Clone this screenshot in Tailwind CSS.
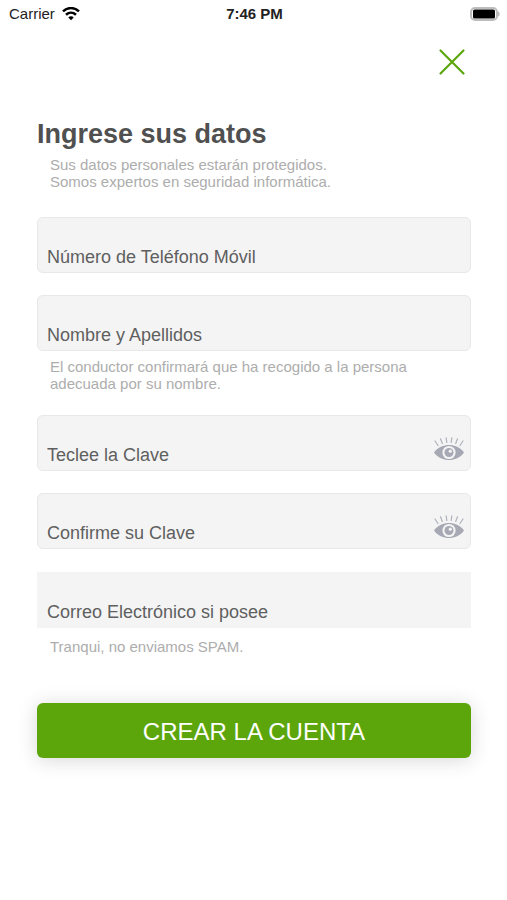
<!DOCTYPE html>
<html lang="es">
<head>
<meta charset="utf-8">
<meta name="viewport" content="width=device-width, initial-scale=1">
<title>Ingrese sus datos</title>
<script src="https://cdn.jsdelivr.net/npm/@tailwindcss/browser@4"></script>
</head>
<body class="min-h-screen bg-white font-['Liberation_Sans',Arial,sans-serif] text-[#545454]">
<svg class="hidden" aria-hidden="true">
  <symbol id="eye" viewBox="0 0 30 24">
    <path d="M0 15.500C4 10 9.500 8 15 8S26 10 30 15.500C26 21 20.500 23 15 23S4 21 0 15.500Z" fill="#a6a9b4"/>
    <circle cx="15" cy="15.500" r="6.600" fill="#f4f4f4"/>
    <circle cx="15" cy="15.500" r="4.500" fill="#a6a9b4"/>
    <circle cx="16.300" cy="14.200" r="1.600" fill="#f4f4f4"/>
    <path d="M1 4L4 8.500M6.500 1.800L8.300 6.500M12.200 .8L12.800 5.500M17.800 .8L17.200 5.500M23.500 1.800L21.700 6.500M29 4L26 8.500" stroke="#b0b2bc" stroke-width="1.200" stroke-linecap="round"/>
  </symbol>
</svg>
<header class="grid h-7 grid-cols-3 items-center pl-[9px] pr-[7px] text-[15px] leading-5 text-[#222]">
  <div class="flex items-center gap-[7px]">
    <span>Carrier</span>
    <svg class="h-[14px] w-[18px]" viewBox="0 0 18 14" fill="none" stroke="#000" stroke-width="2.500" aria-hidden="true">
      <path d="M1 4.300C5.500 0 12.500 0 17 4.300M4 7.700C7 5 11 5 14 7.700"/>
      <path d="M6.300 10.400C7.800 9 10.200 9 11.700 10.400L9 13.300Z" fill="#000" stroke="none"/>
    </svg>
  </div>
  <time class="text-center font-bold">7:46 PM</time>
  <svg class="h-[15px] w-[30px] justify-self-end" viewBox="0 0 30 15" aria-hidden="true">
    <rect x="1" y="1" width="26" height="12" rx="4" fill="#fff" stroke="#bdbdbd" stroke-width="2"/>
    <rect x="3" y="2.500" width="22" height="9" rx="1.500" fill="#000"/>
    <path d="M28 4.500C30.300 5 30.300 9 28 9.500Z" fill="#bdbdbd"/>
  </svg>
</header>
<main class="pl-[37px] pr-9">
  <div class="flex justify-end pt-[18px]">
    <button type="button" aria-label="Cerrar" class="mr-[3px] p-[2px]">
      <svg class="size-7" viewBox="0 0 28 28" fill="none" stroke="#5ca60c" stroke-width="2.200" stroke-linecap="round"><path d="M2.500 2.500L25.500 25.500M25.500 2.500L2.500 25.500"/></svg>
    </button>
  </div>
  <h1 class="mt-[38px] text-[27px] leading-9 font-bold text-[#505050]">Ingrese sus datos</h1>
  <p class="mt-1 pl-[13px] text-[15px] leading-[17px] text-[#adadad]">Sus datos personales estarán protegidos.<br>Somos expertos en seguridad informática.</p>
  <form class="mt-[27px]">
    <input type="tel" aria-label="Número de Teléfono Móvil" placeholder="Número de Teléfono Móvil" class="block h-14 w-full rounded-md border border-[#e8e8e8] bg-[#f4f4f4] px-[9px] pt-6 text-[18px] outline-none placeholder:text-[#5f5f5f]">
    <input type="text" aria-label="Nombre y Apellidos" aria-describedby="name-hint" placeholder="Nombre y Apellidos" class="mt-[22px] block h-14 w-full rounded-md border border-[#e8e8e8] bg-[#f4f4f4] px-[9px] pt-6 text-[18px] outline-none placeholder:text-[#5f5f5f]">
    <p id="name-hint" class="mt-[7px] pl-[13px] text-[15px] leading-[17px] text-[#adadad]">El conductor confirmará que ha recogido a la persona<br>adecuada por su nombre.</p>
    <div class="mt-[23px] flex h-14 rounded-md border border-[#e8e8e8] bg-[#f4f4f4] pr-[6px]">
      <input type="password" aria-label="Teclee la Clave" placeholder="Teclee la Clave" class="min-w-0 flex-1 px-[9px] pt-6 text-[18px] outline-none placeholder:text-[#5f5f5f]">
      <button type="button" aria-label="Mostrar la clave" class="self-end pb-[9px]"><svg class="h-6 w-[30px]"><use href="#eye"/></svg></button>
    </div>
    <div class="mt-[22px] flex h-14 rounded-md border border-[#e8e8e8] bg-[#f4f4f4] pr-[6px]">
      <input type="password" aria-label="Confirme su Clave" placeholder="Confirme su Clave" class="min-w-0 flex-1 px-[9px] pt-6 text-[18px] outline-none placeholder:text-[#5f5f5f]">
      <button type="button" aria-label="Mostrar la clave confirmada" class="self-end pb-[9px]"><svg class="h-6 w-[30px]"><use href="#eye"/></svg></button>
    </div>
    <input type="email" aria-label="Correo Electrónico si posee" aria-describedby="mail-hint" placeholder="Correo Electrónico si posee" class="mt-[23px] block h-14 w-full bg-[#f4f4f4] px-[10px] pt-6 text-[18px] outline-none placeholder:text-[#5f5f5f]">
    <p id="mail-hint" class="mt-[10px] pl-[13px] text-[15px] leading-[17px] text-[#adadad]">Tranqui, no enviamos SPAM.</p>
    <button type="submit" class="mt-12 h-[55px] w-full rounded-md bg-[#5ca60c] pt-[2px] text-[24px] text-white shadow-[0_2px_20px_rgba(0,0,0,0.16)]">CREAR LA CUENTA</button>
  </form>
</main>
</body>
</html>
